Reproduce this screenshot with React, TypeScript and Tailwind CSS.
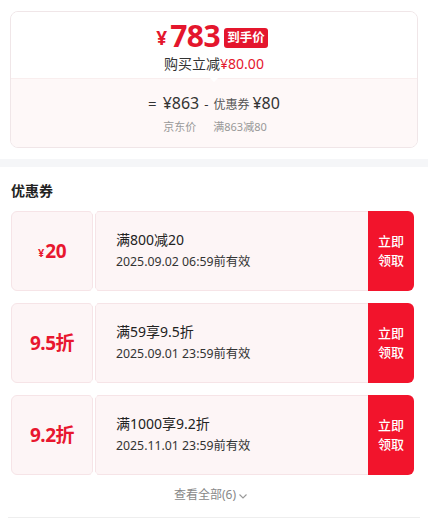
import React from 'react';

const coupons = [
  { big: '20', yen: true, title: '满800减20', date: '2025.09.02 06:59前有效' },
  { big: '9.5折', yen: false, title: '满59享9.5折', date: '2025.09.01 23:59前有效' },
  { big: '9.2折', yen: false, title: '满1000享9.2折', date: '2025.11.01 23:59前有效' },
];

function Coupon({ c }: { c: (typeof coupons)[number] }) {
  return (
    <div className="relative flex h-[80px]">
      <div className="w-[82px] shrink-0 rounded-l-[6px] rounded-r-[4px] border border-[#f6e4e7] bg-[#fdf5f6] flex items-center justify-center text-[#e8172f] font-bold">
        {c.yen && <span className="text-[11px] mt-[4px] mr-[1px]">¥</span>}
        <span className="text-[19px] tracking-[-0.5px]">{c.big}</span>
      </div>
      <div className="w-[2px] shrink-0" />
      <div className="flex-1 rounded-l-[4px] border border-r-0 border-[#f6e4e7] bg-[#fdf5f6] flex flex-col justify-center pl-[20px] text-[#222]">
        <div className="text-[14px] leading-[20px]">{c.title}</div>
        <div className="text-[12.3px] leading-[20px] mt-[2px] text-[#333]">{c.date}</div>
      </div>
      <div className="w-[46px] shrink-0 rounded-r-[6px] bg-[#f2142c] flex items-center justify-center text-white text-[13px] font-medium leading-[19px] text-center">
        立即<br />领取
      </div>
      <span className="absolute left-[80px] top-[-3px] w-[6px] h-[6px] rounded-full bg-white" />
      <span className="absolute left-[80px] bottom-[-3px] w-[6px] h-[6px] rounded-full bg-white" />
    </div>
  );
}

export default function App() {
  return (
    <div className="w-[428px] h-[532px] bg-white overflow-hidden" style={{ fontFamily: '"Noto Sans", "Noto Sans CJK SC", sans-serif' }}>
      <div className="px-[10px] pt-[11px]">
        <div className="rounded-[8px] border border-[#f0e6e8] overflow-hidden">
          <div className="relative h-[66px] bg-white flex flex-col items-center pt-[7px]">
            <div className="flex items-center text-[#e4162d] font-bold h-[34px] mr-[4px]">
              <span className="text-[19px] mt-[4px] mr-[3px]">¥</span>
              <span className="text-[30px] leading-none tracking-[-0.5px]">783</span>
              <span className="ml-[4px] mt-[4px] h-[20px] px-[3px] rounded-[3px] bg-[#e4162d] text-white text-[12.5px] leading-[20px]">到手价</span>
            </div>
            <div className="text-[14px] leading-[18px] text-[#333] mt-[2px]">
              购买立减<span className="text-[#e4162d]">¥80.00</span>
            </div>
            <span className="absolute left-1/2 bottom-[-4px] -translate-x-1/2 w-0 h-0 border-x-[5px] border-x-transparent border-t-[5px] border-t-white z-10" />
          </div>
          <div className="h-[69px] bg-[#fef8f8] border-t border-[#f9eeee] flex flex-col items-center pt-[12px]">
            <div className="flex items-baseline text-[#333] leading-[24px]">
              <span className="text-[15px] mr-[6px]">=</span>
              <span className="text-[16px]">¥863</span>
              <span className="text-[13px] mx-[5px]">-</span>
              <span className="text-[12px] text-[#555]">优惠券</span>
              <span className="text-[16px] ml-[3px]">¥80</span>
            </div>
            <div className="flex text-[#999] mt-[1px] leading-[18px] ml-[2px]">
              <span className="text-[11px]">京东价</span>
              <span className="text-[11px] ml-[17px]">满863减80</span>
            </div>
          </div>
        </div>
      </div>
      <div className="h-[8px] bg-[#f5f6f8] mt-[11px]" />
      <div className="px-[10px]">
        <div className="pt-[14px] pb-[10px] text-[14px] font-bold text-[#222] leading-[20px] pl-[1px]">优惠券</div>
        <div className="flex flex-col gap-[12px] pl-[1px] pr-[4px]">
          {coupons.map((c) => (
            <Coupon key={c.title} c={c} />
          ))}
        </div>
        <div className="flex items-center justify-center h-[38px] text-[12px] text-[#888] mt-[1px] mr-[6px]">
          查看全部(6)
          <svg width="10" height="10" viewBox="0 0 10 10" className="ml-[2px] mt-[2px]">
            <path d="M1.5 3.5 L5 7 L8.5 3.5" fill="none" stroke="#999" strokeWidth="1.1" />
          </svg>
        </div>
        <div className="h-px bg-[#eeeeee] mt-[3px] mx-[-2px]" />
      </div>
    </div>
  );
}
